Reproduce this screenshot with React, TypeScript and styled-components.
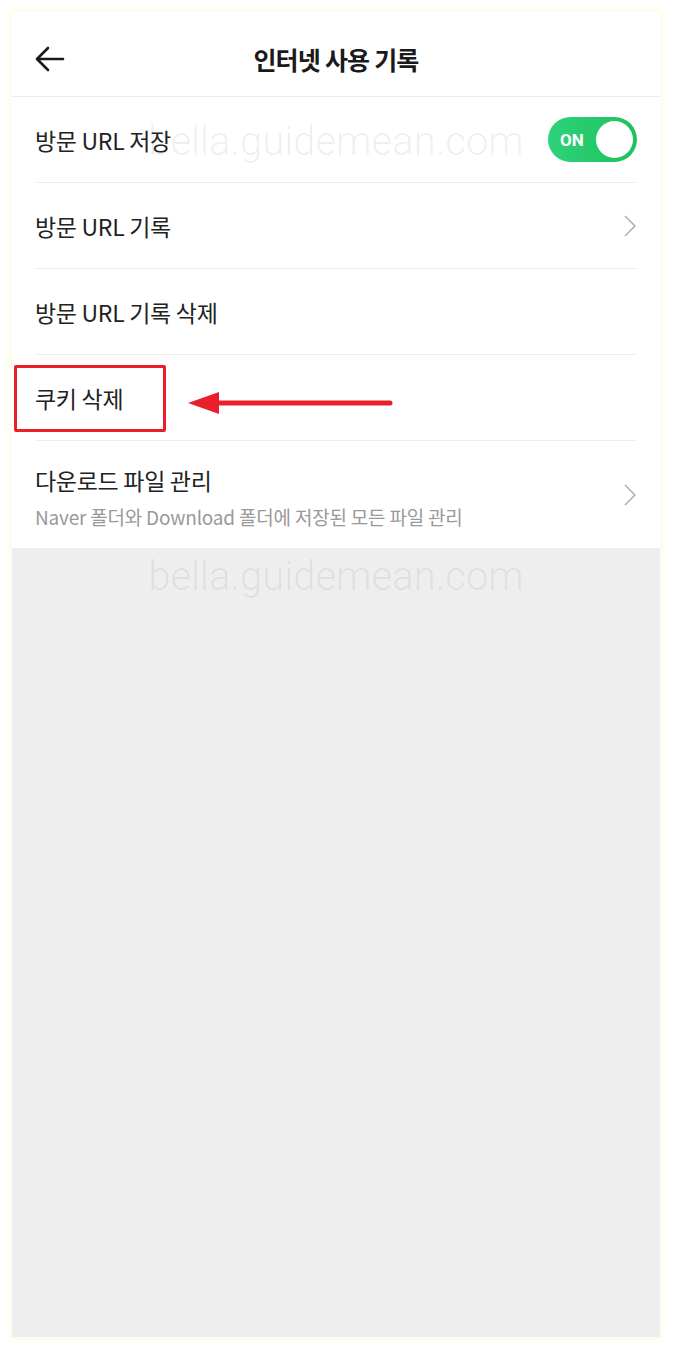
import styled, { createGlobalStyle } from "styled-components";

const GlobalStyle = createGlobalStyle`
  html, body {
    margin: 0;
    padding: 0;
    background: #ffffff;
  }
  body {
    font-family: "Noto Sans CJK KR", "Noto Sans", sans-serif;
    color: #222222;
  }
`;

const Page = styled.div`
  width: 673px;
  height: 1350px;
  padding: 12px 13px 13px 12px;
  box-sizing: border-box;
  display: flex;
`;

const Panel = styled.div`
  position: relative;
  flex: 1;
  display: flex;
  flex-direction: column;
  background: #eeeeee;
  box-shadow: 0 0 6px 3px #fdfde4;
  overflow: hidden;
`;

const Header = styled.header`
  height: 85px;
  flex-shrink: 0;
  display: flex;
  align-items: center;
  padding: 10px 0 0 22px;
  box-sizing: border-box;
  background: #ffffff;
  border-bottom: 1px solid #ececec;
  position: relative;
`;

const BackButton = styled.button`
  width: 32px;
  height: 32px;
  padding: 0;
  border: none;
  background: none;
  display: flex;
  align-items: center;
  justify-content: center;
`;

const Title = styled.h1`
  position: absolute;
  left: 0;
  right: 0;
  top: 10px;
  bottom: 0;
  margin: 0;
  display: flex;
  align-items: center;
  justify-content: center;
  font-size: 25px;
  font-weight: 700;
  letter-spacing: -0.8px;
  color: #1a1a1a;
  pointer-events: none;
`;

const List = styled.ul`
  list-style: none;
  margin: 0;
  padding: 0 23px;
  background: #ffffff;
`;

const Row = styled.li<{ $tall?: boolean; $last?: boolean }>`
  position: relative;
  height: ${(p) => (p.$tall ? "107px" : "86px")};
  display: flex;
  align-items: center;
  justify-content: space-between;
  border-bottom: ${(p) => (p.$last ? "none" : "1px solid #eeeeee")};
  box-sizing: border-box;
`;

const RowText = styled.div`
  display: flex;
  flex-direction: column;
  gap: 6px;
  padding-top: 4px;
`;

const Label = styled.span`
  font-size: 23px;
  letter-spacing: -0.3px;
  color: #222222;
`;

const Sub = styled.span`
  font-size: 19px;
  letter-spacing: -0.2px;
  color: #999999;
`;

const Toggle = styled.div`
  width: 89px;
  height: 45px;
  border-radius: 23px;
  background: linear-gradient(90deg, #2fd27a, #1cc25a);
  display: flex;
  align-items: center;
  justify-content: space-between;
  padding: 0 4px 0 12px;
  box-sizing: border-box;
`;

const ToggleText = styled.span`
  font-family: "Roboto", "Noto Sans", sans-serif;
  font-size: 17px;
  font-weight: 700;
  color: #ffffff;
`;

const Knob = styled.span`
  width: 37px;
  height: 37px;
  border-radius: 50%;
  background: #ffffff;
`;

const Highlight = styled.div`
  position: absolute;
  left: -21px;
  top: 10px;
  width: 152px;
  height: 67px;
  border: 3px solid #e8202a;
  border-radius: 2px;
  box-sizing: border-box;
`;

const Pointer = styled.svg`
  position: absolute;
  left: 153px;
  top: 36px;
`;

const Filler = styled.div`
  flex: 1;
`;

const Watermark = styled.span<{ $top: number }>`
  position: absolute;
  left: 0;
  right: 0;
  top: ${(p) => p.$top}px;
  text-align: center;
  font-family: "Roboto", "Noto Sans", sans-serif;
  font-weight: 300;
  font-size: 40px;
  color: rgba(0, 0, 0, 0.07);
  pointer-events: none;
  white-space: nowrap;
`;

const Chevron = () => (
  <svg width="14" height="22" viewBox="0 0 14 22">
    <polyline
      points="2,1 12,11 2,21"
      fill="none"
      stroke="#a8a8a8"
      strokeWidth="1.4"
    />
  </svg>
);

export default function App() {
  return (
    <>
      <GlobalStyle />
      <Page>
        <Panel>
          <Header>
            <BackButton aria-label="back">
              <svg width="30" height="26" viewBox="0 0 30 26">
                <path
                  d="M28 13H3M13 2L2 13L13 24"
                  fill="none"
                  stroke="#1a1a1a"
                  strokeWidth="2.6"
                  strokeLinecap="round"
                  strokeLinejoin="round"
                />
              </svg>
            </BackButton>
            <Title>인터넷 사용 기록</Title>
          </Header>
          <List>
            <Row>
              <Label>방문 URL 저장</Label>
              <Toggle>
                <ToggleText>ON</ToggleText>
                <Knob />
              </Toggle>
            </Row>
            <Row>
              <Label>방문 URL 기록</Label>
              <Chevron />
            </Row>
            <Row>
              <Label>방문 URL 기록 삭제</Label>
            </Row>
            <Row>
              <Label>쿠키 삭제</Label>
              <Highlight />
              <Pointer width="205" height="26" viewBox="0 0 205 26">
                <polygon points="0,12 31,1 31,23" fill="#e8202a" />
                <line
                  x1="28"
                  y1="12"
                  x2="202"
                  y2="12"
                  stroke="#e8202a"
                  strokeWidth="5"
                  strokeLinecap="round"
                />
              </Pointer>
            </Row>
            <Row $tall $last>
              <RowText>
                <Label>다운로드 파일 관리</Label>
                <Sub>Naver 폴더와 Download 폴더에 저장된 모든 파일 관리</Sub>
              </RowText>
              <Chevron />
            </Row>
          </List>
          <Filler />
          <Watermark $top={106}>bella.guidemean.com</Watermark>
          <Watermark $top={541}>bella.guidemean.com</Watermark>
        </Panel>
      </Page>
    </>
  );
}
